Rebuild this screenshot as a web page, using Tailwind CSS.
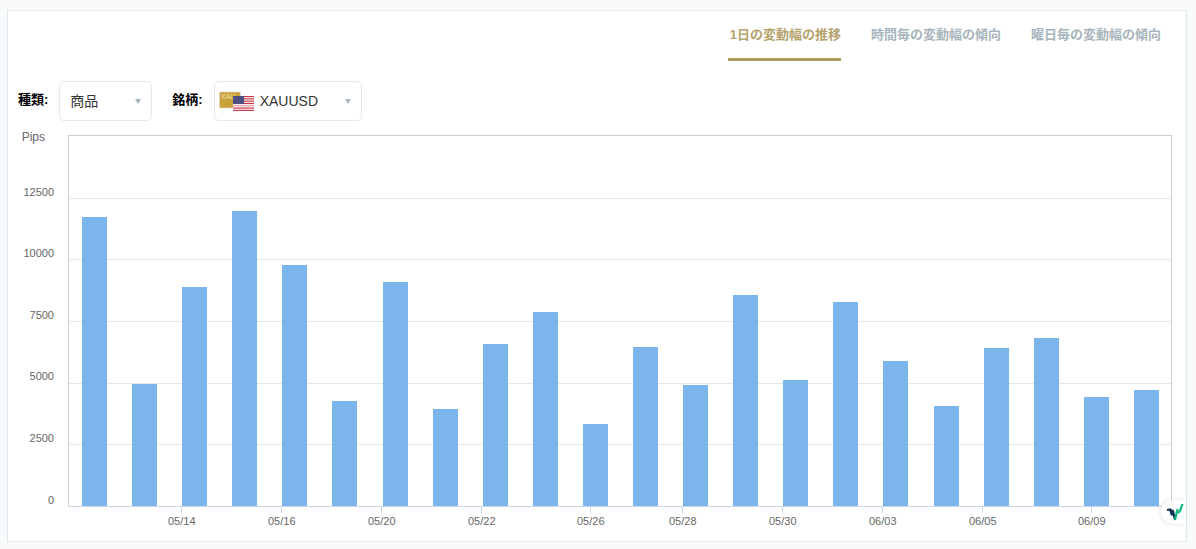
<!DOCTYPE html>
<html lang="ja">
<head>
<meta charset="utf-8">
<title>変動幅</title>
<script src="https://cdn.jsdelivr.net/npm/@tailwindcss/browser@4"></script>
</head>
<body class="m-0 h-[549px] w-[1196px] overflow-hidden bg-[#f9fafc] font-['Liberation_Sans','Noto_Sans_CJK_JP',sans-serif]">
<div class="pl-[7px] pt-[10px]">
  <div class="relative h-[532px] w-[1180px] border border-[#e0eaec] bg-white">
    <!-- tabs -->
    <div class="flex h-[50px] justify-end gap-[30px] pr-[25px] text-[13px] leading-[18px] font-bold">
      <div class="h-[50px] border-b-[3px] border-[#b19c63] pl-[2px] pt-[15px] text-[#b5a26d]">1日の変動幅の推移</div>
      <div class="pt-[15px] text-[#a8b5bd]">時間毎の変動幅の傾向</div>
      <div class="pt-[15px] text-[#a8b5bd]">曜日毎の変動幅の傾向</div>
    </div>
    <!-- filters -->
    <div class="mt-[20px] flex h-10 items-center pl-[10px] text-black">
      <span class="mr-[11px] -mt-[2px] text-[13px] leading-4 font-bold">種類:</span>
      <div class="flex h-10 w-[93px] items-center justify-between rounded-[5px] border border-[#e0eaec] pl-[10px] pr-[10px] text-[14px] text-[#333]">
        <span>商品</span>
        <span class="h-0 w-0 border-x-[3.5px] border-t-[5px] border-x-transparent border-t-[#a8b5bd]"></span>
      </div>
      <span class="ml-[20px] mr-[11px] -mt-[2px] text-[13px] leading-4 font-bold">銘柄:</span>
      <div class="flex h-10 w-[148px] items-center justify-between rounded-[5px] border border-[#e0eaec] pl-[4px] pr-[10px] text-[14px] text-[#333]">
        <span class="flex items-center">
          <svg width="36" height="21" viewBox="0 0 36 21" class="mr-[5px] block">
            <rect x="0.5" y="1" width="21" height="16" fill="#c9a23c" stroke="#ddd" stroke-width="0.5"/>
            <text x="2" y="8" font-size="7" fill="#f3e3b0" font-family="Liberation Sans">XAU</text>
            <rect x="14" y="5" width="21" height="15" fill="#fff"/>
            <rect x="14" y="5" width="21" height="1.2" fill="#c8384a"/>
            <rect x="14" y="7.3" width="21" height="1.2" fill="#c8384a"/>
            <rect x="14" y="9.6" width="21" height="1.2" fill="#c8384a"/>
            <rect x="14" y="11.9" width="21" height="1.2" fill="#c8384a"/>
            <rect x="14" y="14.2" width="21" height="1.2" fill="#e49aa4"/>
            <rect x="14" y="16.5" width="21" height="1.2" fill="#c8384a"/>
            <rect x="14" y="18.8" width="21" height="1.2" fill="#c8384a"/>
            <rect x="14" y="5" width="11" height="8" fill="#4d4f80"/>
          </svg>
          <span>XAUUSD</span>
        </span>
        <span class="h-0 w-0 border-x-[3.5px] border-t-[5px] border-x-transparent border-t-[#a8b5bd]"></span>
      </div>
    </div>
    <!-- chart -->
    <div class="mt-[14px] flex h-[372px]">
      <div class="flex w-[60px] flex-col items-end gap-[47.55px] pr-[14px] text-[11px] leading-[14px] font-normal text-[#666]">
        <div class="-mb-[47.55px] -mt-[4px] mr-[9px] h-[13px] text-[12px] leading-[13px] text-[#666]">Pips</div>
        <div class="mt-[40.8px]">12500</div>
        <div>10000</div>
        <div>7500</div>
        <div>5000</div>
        <div>2500</div>
        <div>0</div>
      </div>
      <div class="relative h-[372px] w-[1104px] border-x border-t border-b border-x-[#ccc] border-t-[#ccc] border-b-[#ccd6eb]">
        <div class="absolute inset-x-0 top-[61.8px] flex flex-col gap-[60.6px]">
          <div class="h-px bg-[#e6e6e6]"></div>
          <div class="h-px bg-[#e6e6e6]"></div>
          <div class="h-px bg-[#e6e6e6]"></div>
          <div class="h-px bg-[#e6e6e6]"></div>
          <div class="h-px bg-[#e6e6e6]"></div>
        </div>
        <div class="relative -mr-[0.42px] ml-[0.42px] flex h-full items-end">
          <div class="flex flex-1 justify-center"><div class="h-[289px] w-[25px] bg-[#7cb5ec]"></div></div>
          <div class="flex flex-1 justify-center"><div class="h-[122px] w-[25px] bg-[#7cb5ec]"></div></div>
          <div class="flex flex-1 justify-center"><div class="h-[219px] w-[25px] bg-[#7cb5ec]"></div></div>
          <div class="flex flex-1 justify-center"><div class="h-[295px] w-[25px] bg-[#7cb5ec]"></div></div>
          <div class="flex flex-1 justify-center"><div class="h-[241px] w-[25px] bg-[#7cb5ec]"></div></div>
          <div class="flex flex-1 justify-center"><div class="h-[105px] w-[25px] bg-[#7cb5ec]"></div></div>
          <div class="flex flex-1 justify-center"><div class="h-[224px] w-[25px] bg-[#7cb5ec]"></div></div>
          <div class="flex flex-1 justify-center"><div class="h-[97px] w-[25px] bg-[#7cb5ec]"></div></div>
          <div class="flex flex-1 justify-center"><div class="h-[162px] w-[25px] bg-[#7cb5ec]"></div></div>
          <div class="flex flex-1 justify-center"><div class="h-[194px] w-[25px] bg-[#7cb5ec]"></div></div>
          <div class="flex flex-1 justify-center"><div class="h-[82px] w-[25px] bg-[#7cb5ec]"></div></div>
          <div class="flex flex-1 justify-center"><div class="h-[159px] w-[25px] bg-[#7cb5ec]"></div></div>
          <div class="flex flex-1 justify-center"><div class="h-[121px] w-[25px] bg-[#7cb5ec]"></div></div>
          <div class="flex flex-1 justify-center"><div class="h-[211px] w-[25px] bg-[#7cb5ec]"></div></div>
          <div class="flex flex-1 justify-center"><div class="h-[126px] w-[25px] bg-[#7cb5ec]"></div></div>
          <div class="flex flex-1 justify-center"><div class="h-[204px] w-[25px] bg-[#7cb5ec]"></div></div>
          <div class="flex flex-1 justify-center"><div class="h-[145px] w-[25px] bg-[#7cb5ec]"></div></div>
          <div class="flex flex-1 justify-center"><div class="h-[100px] w-[25px] bg-[#7cb5ec]"></div></div>
          <div class="flex flex-1 justify-center"><div class="h-[158px] w-[25px] bg-[#7cb5ec]"></div></div>
          <div class="flex flex-1 justify-center"><div class="h-[168px] w-[25px] bg-[#7cb5ec]"></div></div>
          <div class="flex flex-1 justify-center"><div class="h-[109px] w-[25px] bg-[#7cb5ec]"></div></div>
          <div class="flex flex-1 justify-center"><div class="h-[116px] w-[25px] bg-[#7cb5ec]"></div></div>
        </div>
      </div>
    </div>
    <!-- x axis -->
    <div class="flex pl-[173px] text-[11px] leading-[14px] text-[#666]">
      <div class="w-[100px]"><div class="h-[6px] w-px bg-[#ccd6eb]"></div><div class="mt-[1px] w-fit -translate-x-[13px]">05/14</div></div>
      <div class="w-[100px]"><div class="h-[6px] w-px bg-[#ccd6eb]"></div><div class="mt-[1px] w-fit -translate-x-[13px]">05/16</div></div>
      <div class="w-[100px]"><div class="h-[6px] w-px bg-[#ccd6eb]"></div><div class="mt-[1px] w-fit -translate-x-[13px]">05/20</div></div>
      <div class="w-[109px]"><div class="h-[6px] w-px bg-[#ccd6eb]"></div><div class="mt-[1px] w-fit -translate-x-[13px]">05/22</div></div>
      <div class="w-[92px]"><div class="h-[6px] w-px bg-[#ccd6eb]"></div><div class="mt-[1px] w-fit -translate-x-[13px]">05/26</div></div>
      <div class="w-[100px]"><div class="h-[6px] w-px bg-[#ccd6eb]"></div><div class="mt-[1px] w-fit -translate-x-[13px]">05/28</div></div>
      <div class="w-[100px]"><div class="h-[6px] w-px bg-[#ccd6eb]"></div><div class="mt-[1px] w-fit -translate-x-[13px]">05/30</div></div>
      <div class="w-[100px]"><div class="h-[6px] w-px bg-[#ccd6eb]"></div><div class="mt-[1px] w-fit -translate-x-[13px]">06/03</div></div>
      <div class="w-[109px]"><div class="h-[6px] w-px bg-[#ccd6eb]"></div><div class="mt-[1px] w-fit -translate-x-[13px]">06/05</div></div>
      <div class="w-[40px]"><div class="h-[6px] w-px bg-[#ccd6eb]"></div><div class="mt-[1px] w-fit -translate-x-[13px]">06/09</div></div>
    </div>
    <!-- widget badge -->
    <div class="absolute right-0 top-[489px] flex h-[24px] w-[25px] items-center justify-end rounded-l-full bg-white pr-[2px] shadow-[-1px_0_4px_rgba(0,0,0,0.12)]">
      <svg width="20" height="20" viewBox="0 0 20 20" fill="none" class="block">
        <path d="M3 8 L6 7.5 L8 13.5 M6.5 8 L9 9 L11 18" stroke="#12304f" stroke-width="2.2"/>
        <path d="M11 18 L13.5 7 M14 11 L16 9 L18.5 2" stroke="#10b981" stroke-width="2.2"/>
      </svg>
    </div>
  </div>
</div>
</body>
</html>
